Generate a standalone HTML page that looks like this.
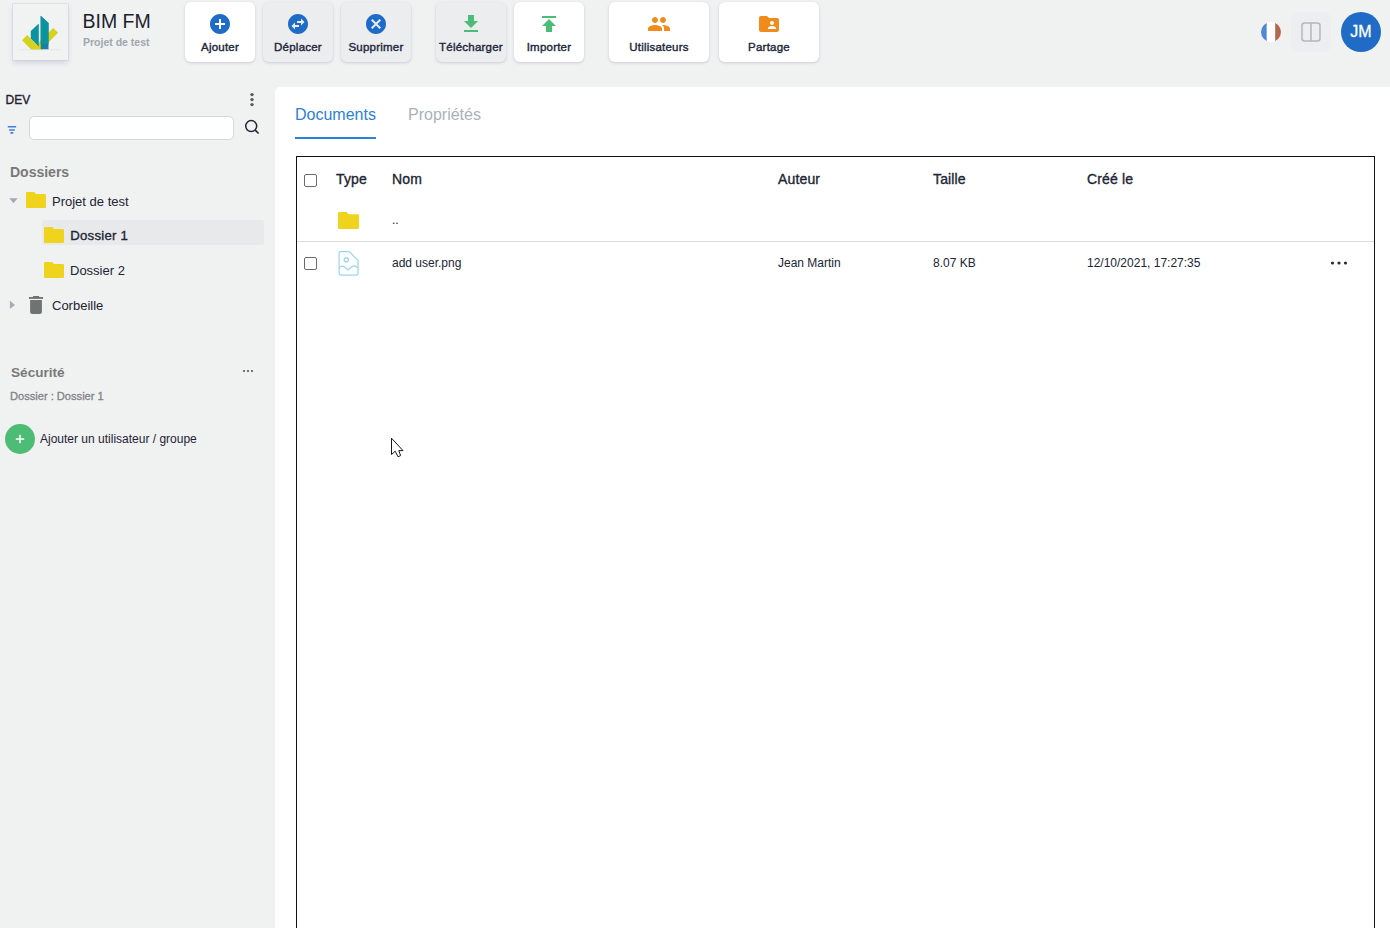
<!DOCTYPE html>
<html><head><meta charset="utf-8">
<style>
*{margin:0;padding:0;box-sizing:border-box}
html,body{width:1390px;height:928px;overflow:hidden}
body{background:#f0f1f1;font-family:"Liberation Sans",sans-serif;color:#212534;position:relative}
.a{position:absolute;white-space:nowrap;line-height:1}
.btn{position:absolute;top:2px;height:60px;background:#fff;border-radius:6px;box-shadow:0 1px 3px rgba(70,75,120,.22)}
.btn.g{background:#ecedef}
.btn svg{position:absolute;top:10px;left:50%;margin-left:-12px}
.btn span{position:absolute;left:0;right:0;text-align:center;top:40px;font-size:11.5px;line-height:1;color:#22273a;-webkit-text-stroke:0.4px #22273a;letter-spacing:0.22px}
.b{font-weight:bold}
.m{-webkit-text-stroke:0.35px currentColor}
</style></head><body>

<!-- logo -->
<div class="a" style="left:13px;top:4px;width:55px;height:56px;background:#f1f2f2;box-shadow:0 0 0 0.6px rgba(190,192,215,.5),0 3px 5px rgba(70,75,130,.16)"></div>
<svg class="a" style="left:13px;top:4px" width="55" height="56" viewBox="13 4 55 56">
  <line x1="19" y1="49.6" x2="60" y2="49.6" stroke="#e3e4e6" stroke-width="0.7"/>
  <polygon points="22,40.3 27.1,35 36.6,44.5 53.2,27.9 58.1,32.8 41.5,49.4 31.1,49.4" fill="#d8d21f"/>
  <polygon points="30.8,31.1 38.3,23.9 38.8,23.9 38.8,46.5 30.8,38.5" fill="#0b939f"/>
  <polygon points="40.7,15.8 48.5,22.9 48.5,49.2 40.7,49.2" fill="#1a80a0"/>
  <polygon points="40.7,15.8 48.5,22.9 48.5,44 40.7,44" fill="#0b939f"/>
</svg>
<div class="a" style="left:82.5px;top:11.5px;font-size:19.5px;color:#1c1f2b">BIM FM</div>
<div class="a b" style="left:83px;top:37px;font-size:10.5px;color:#9ea6b0">Projet de test</div>

<!-- toolbar -->
<div class="btn" style="left:185px;width:70px">
  <svg width="24" height="24" viewBox="0 0 24 24"><path fill="#1f6cc8" d="M12 2C6.48 2 2 6.48 2 12s4.48 10 10 10 10-4.48 10-10S17.52 2 12 2zm5 11h-4v4h-2v-4H7v-2h4V7h2v4h4v2z"/></svg>
  <span>Ajouter</span></div>
<div class="btn g" style="left:263px;width:70px">
  <svg width="24" height="24" viewBox="0 0 24 24"><path fill="#1f6cc8" d="M22 12c0-5.52-4.48-10-10-10S2 6.48 2 12s4.48 10 10 10 10-4.48 10-10zm-7-5.5l3.5 3.5-3.5 3.5V11h-4V9h4V6.5zm-6 11L5.5 14 9 10.5V13h4v2H9v2.5z"/></svg>
  <span>Déplacer</span></div>
<div class="btn g" style="left:341px;width:70px">
  <svg width="24" height="24" viewBox="0 0 24 24"><path fill="#1f6cc8" d="M12 2C6.47 2 2 6.47 2 12s4.47 10 10 10 10-4.47 10-10S17.53 2 12 2zm5 13.59L15.59 17 12 13.41 8.41 17 7 15.59 10.59 12 7 8.41 8.41 7 12 10.59 15.59 7 17 8.41 13.41 12 17 15.59z"/></svg>
  <span>Supprimer</span></div>
<div class="btn g" style="left:436px;width:70px">
  <svg width="24" height="24" viewBox="0 0 24 24"><path fill="#4cbd77" d="M19 9h-4V3H9v6H5l7 7 7-7zM5 18v2h14v-2H5z"/></svg>
  <span>Télécharger</span></div>
<div class="btn" style="left:514px;width:70px">
  <svg width="24" height="24" viewBox="0 0 24 24"><path fill="#4cbd77" d="M5 4v2h14V4H5zm0 10h4v6h6v-6h4l-7-7-7 7z"/></svg>
  <span>Importer</span></div>
<div class="btn" style="left:609px;width:100px">
  <svg width="24" height="24" viewBox="0 0 24 24"><path fill="#f08c1e" d="M16 11c1.66 0 2.99-1.34 2.99-3S17.66 5 16 5c-1.66 0-3 1.34-3 3s1.34 3 3 3zm-8 0c1.66 0 2.99-1.34 2.99-3S9.66 5 8 5C6.34 5 5 6.34 5 8s1.34 3 3 3zm0 2c-2.33 0-7 1.17-7 3.5V19h14v-2.5c0-2.33-4.67-3.5-7-3.5zm8 0c-.29 0-.62.02-.97.05 1.16.84 1.97 1.97 1.97 3.45V19h6v-2.5c0-2.330-4.67-3.5-7-3.5z"/></svg>
  <span>Utilisateurs</span></div>
<div class="btn" style="left:719px;width:100px">
  <svg width="24" height="24" viewBox="0 0 24 24"><path fill="#f08c1e" d="M20 6h-8l-2-2H4c-1.1 0-1.99.9-1.99 2L2 18c0 1.1.9 2 2 2h16c1.1 0 2-.9 2-2V8c0-1.1-.9-2-2-2zm-5 3c1.1 0 2 .9 2 2s-.9 2-2 2-2-.9-2-2 .9-2 2-2zm4 8h-8v-1c0-1.33 2.67-2 4-2s4 .67 4 2v1z"/></svg>
  <span>Partage</span></div>

<!-- top right -->
<svg class="a" style="left:1261px;top:22px" width="20" height="20" viewBox="0 0 20 20">
  <defs><clipPath id="fc"><circle cx="10" cy="10" r="10"/></clipPath></defs>
  <g clip-path="url(#fc)"><rect x="0" y="0" width="5.8" height="20" fill="#5087d6"/><rect x="5.8" y="0" width="8.4" height="20" fill="#fff"/><rect x="14.2" y="0" width="5.8" height="20" fill="#b3684e"/></g>
</svg>
<div class="a" style="left:1291px;top:12px;width:40px;height:40px;border-radius:7px;background:#edeef0"></div>
<svg class="a" style="left:1301px;top:22px" width="20" height="20" viewBox="0 0 20 20">
  <rect x="1" y="1" width="18" height="18" rx="2.5" fill="none" stroke="#b3b6c2" stroke-width="1.5"/>
  <line x1="10" y1="1" x2="10" y2="19" stroke="#b3b6c2" stroke-width="1.5"/>
</svg>
<div class="a" style="left:1341px;top:12px;width:40px;height:40px;border-radius:50%;background:#1f6bc6;color:#fff;font-size:16px;text-align:center;line-height:40px;-webkit-text-stroke:0.3px #fff">JM</div>

<!-- sidebar -->
<div class="a m" style="left:5.5px;top:94.2px;font-size:12px;color:#1f2233">DEV</div>
<svg class="a" style="left:248px;top:92px" width="8" height="16" viewBox="0 0 8 16">
  <circle cx="4" cy="2.6" r="1.7" fill="#5a5a5a"/><circle cx="4" cy="7.6" r="1.7" fill="#5a5a5a"/><circle cx="4" cy="12.6" r="1.7" fill="#5a5a5a"/>
</svg>
<svg class="a" style="left:6px;top:124px" width="12" height="12" viewBox="0 0 12 12">
  <rect x="1.7" y="2" width="8.5" height="1.6" rx="0.5" fill="#3f7fd6"/><rect x="3.1" y="5.2" width="5.7" height="1.6" rx="0.5" fill="#3f7fd6"/><rect x="4.4" y="8.1" width="3" height="1.6" rx="0.5" fill="#3f7fd6"/>
</svg>
<div class="a" style="left:28.8px;top:116px;width:205px;height:24px;background:#fff;border:1px solid #d5d7df;border-radius:5px"></div>
<svg class="a" style="left:243px;top:118px" width="18" height="18" viewBox="0 0 18 18">
  <circle cx="8.2" cy="8.1" r="5.5" fill="none" stroke="#23233a" stroke-width="1.5"/>
  <line x1="12.2" y1="12.1" x2="15.6" y2="15.5" stroke="#23233a" stroke-width="1.6"/>
</svg>

<div class="a b" style="left:10px;top:165px;font-size:14px;color:#797979">Dossiers</div>
<svg class="a" style="left:9px;top:197.8px" width="10" height="7" viewBox="0 0 10 7"><polygon points="0.4,0.3 8.6,0.3 4.5,5.3" fill="#a3a9b3"/></svg>
<svg class="a" style="left:26px;top:192px" width="20" height="16" viewBox="0 0 20 16"><path d="M1.2 0H8.3L10 2.1H18.8a1.2 1.2 0 0 1 1.2 1.2V14.8a1.2 1.2 0 0 1-1.2 1.2H1.2a1.2 1.2 0 0 1-1.2-1.2V1.2a1.2 1.2 0 0 1 1.2-1.2z" fill="#efd31c"/></svg>
<div class="a" style="left:52px;top:194.5px;font-size:13px;color:#212534">Projet de test</div>

<div class="a" style="left:42px;top:220px;width:222px;height:25px;background:#e8e9ea;border-radius:3px"></div>
<svg class="a" style="left:44px;top:227px" width="20" height="16" viewBox="0 0 20 16"><path d="M1.2 0H8.3L10 2.1H18.8a1.2 1.2 0 0 1 1.2 1.2V14.8a1.2 1.2 0 0 1-1.2 1.2H1.2a1.2 1.2 0 0 1-1.2-1.2V1.2a1.2 1.2 0 0 1 1.2-1.2z" fill="#efd31c"/></svg>
<div class="a" style="left:70.2px;top:229px;font-size:13.2px;color:#212534;-webkit-text-stroke:0.35px #212534;letter-spacing:0.25px">Dossier 1</div>
<svg class="a" style="left:44px;top:262px" width="20" height="16" viewBox="0 0 20 16"><path d="M1.2 0H8.3L10 2.1H18.8a1.2 1.2 0 0 1 1.2 1.2V14.8a1.2 1.2 0 0 1-1.2 1.2H1.2a1.2 1.2 0 0 1-1.2-1.2V1.2a1.2 1.2 0 0 1 1.2-1.2z" fill="#efd31c"/></svg>
<div class="a" style="left:70px;top:264.2px;font-size:13px;color:#212534">Dossier 2</div>

<svg class="a" style="left:9px;top:300px" width="7" height="10" viewBox="0 0 7 10"><polygon points="0.9,0.8 6,5 0.9,9.1" fill="#a6adb8"/></svg>
<svg class="a" style="left:29px;top:296px" width="14" height="18" viewBox="0 0 14 18"><rect x="0" y="1" width="14" height="1.9" fill="#6f7372"/><rect x="4" y="0" width="6.1" height="1.2" fill="#6f7372"/><path d="M1.1 4h11.8v12a2 2 0 0 1-2 2h-7.8a2 2 0 0 1-2-2z" fill="#6f7372"/></svg>
<div class="a" style="left:52px;top:299.4px;font-size:13px;color:#212534">Corbeille</div>

<div class="a b" style="left:11px;top:365.6px;font-size:13.6px;color:#797979">Sécurité</div>
<svg class="a" style="left:242px;top:369px" width="12" height="4" viewBox="0 0 12 4"><circle cx="2" cy="2" r="1.1" fill="#555"/><circle cx="6" cy="2" r="1.1" fill="#555"/><circle cx="10" cy="2" r="1.1" fill="#555"/></svg>
<div class="a" style="left:10px;top:391.1px;font-size:11.1px;color:#7f8388;-webkit-text-stroke:0.3px #7f8388">Dossier : Dossier 1</div>
<div class="a" style="left:5px;top:424px;width:30px;height:30px;border-radius:50%;background:#4dbd76"></div>
<svg class="a" style="left:15px;top:433.5px" width="10" height="10" viewBox="0 0 10 10"><rect x="0.8" y="4.3" width="8.4" height="1.5" fill="#fff"/><rect x="4.25" y="0.8" width="1.5" height="8.4" fill="#fff"/></svg>
<div class="a" style="left:40px;top:432.5px;font-size:12px;color:#1f2233">Ajouter un utilisateur / groupe</div>

<!-- main card -->
<div class="a" style="left:275px;top:87px;width:1115px;height:841px;background:#fff;border-top-left-radius:5px"></div>
<div class="a" style="left:295px;top:106.7px;font-size:16px;color:#2a82d6">Documents</div>
<div class="a" style="left:295px;top:137px;width:81px;height:2px;background:#2a82d6"></div>
<div class="a" style="left:408px;top:106.7px;font-size:16px;color:#a9b1bb">Propriétés</div>

<div class="a" style="left:296px;top:156px;width:1079px;height:780px;border:1.3px solid #111"></div>
<div class="a" style="left:304px;top:174px;width:13px;height:13px;border:1.3px solid #6b6b6b;border-radius:2px"></div>
<div class="a m" style="left:336px;top:172.4px;font-size:14px;letter-spacing:0.15px">Type</div>
<div class="a m" style="left:392px;top:172.4px;font-size:14px;letter-spacing:0.15px">Nom</div>
<div class="a m" style="left:778px;top:172.4px;font-size:14px;letter-spacing:0.15px">Auteur</div>
<div class="a m" style="left:933px;top:172.4px;font-size:14px;letter-spacing:0.15px">Taille</div>
<div class="a m" style="left:1087px;top:172.4px;font-size:14px;letter-spacing:0.15px">Créé le</div>

<svg class="a" style="left:338px;top:212px" width="21" height="17" viewBox="0 0 21 17"><path d="M1.3 0H8.7L10.5 2.2H19.7a1.3 1.3 0 0 1 1.3 1.3V15.7a1.3 1.3 0 0 1-1.3 1.3H1.3a1.3 1.3 0 0 1-1.3-1.3V1.3a1.3 1.3 0 0 1 1.3-1.3z" fill="#efd31c"/></svg>
<div class="a" style="left:392px;top:214px;font-size:12px">..</div>
<div class="a" style="left:297px;top:241px;width:1077px;height:1px;background:#dcdcdc"></div>

<div class="a" style="left:304px;top:257px;width:13px;height:13px;border:1.3px solid #6b6b6b;border-radius:2px"></div>
<svg class="a" style="left:338px;top:251px" width="21" height="25" viewBox="0 0 21 25">
  <path d="M2.6 0.6H11.2L20 9.4V22.6a1.5 1.5 0 0 1-1.5 1.5H2.6a1.5 1.5 0 0 1-1.5-1.5V2.1a1.5 1.5 0 0 1 1.5-1.5z" fill="none" stroke="#98d3f0" stroke-width="1.2"/>
  <circle cx="8.3" cy="8.7" r="2.1" fill="none" stroke="#98d3f0" stroke-width="1.2"/>
  <path d="M1.1 16.8C3 14.8 5 14.8 7 16.4L9.9 18.9 14.2 15.6C15.5 14.6 16.5 14.6 18 15.6L20 17.1" fill="none" stroke="#98d3f0" stroke-width="1.2"/>
</svg>
<div class="a" style="left:392px;top:257px;font-size:12px">add user.png</div>
<div class="a" style="left:778px;top:257px;font-size:12px">Jean Martin</div>
<div class="a" style="left:933px;top:257px;font-size:12px">8.07 KB</div>
<div class="a" style="left:1087px;top:257px;font-size:12px">12/10/2021, 17:27:35</div>
<svg class="a" style="left:1330px;top:260px" width="18" height="6" viewBox="0 0 18 6"><circle cx="2.5" cy="3" r="1.6" fill="#2a2d3a"/><circle cx="9" cy="3" r="1.6" fill="#2a2d3a"/><circle cx="15.5" cy="3" r="1.6" fill="#2a2d3a"/></svg>

<!-- cursor -->
<svg class="a" style="left:390px;top:437px" width="14" height="21" viewBox="0 0 14 21">
  <path d="M1.5 1.2V17.5L5.2 14.2 8 19.8 10.6 18.6 8.8 13.6H13z" fill="#fff" stroke="#15152a" stroke-width="1" stroke-linejoin="miter"/>
</svg>
</body></html>
